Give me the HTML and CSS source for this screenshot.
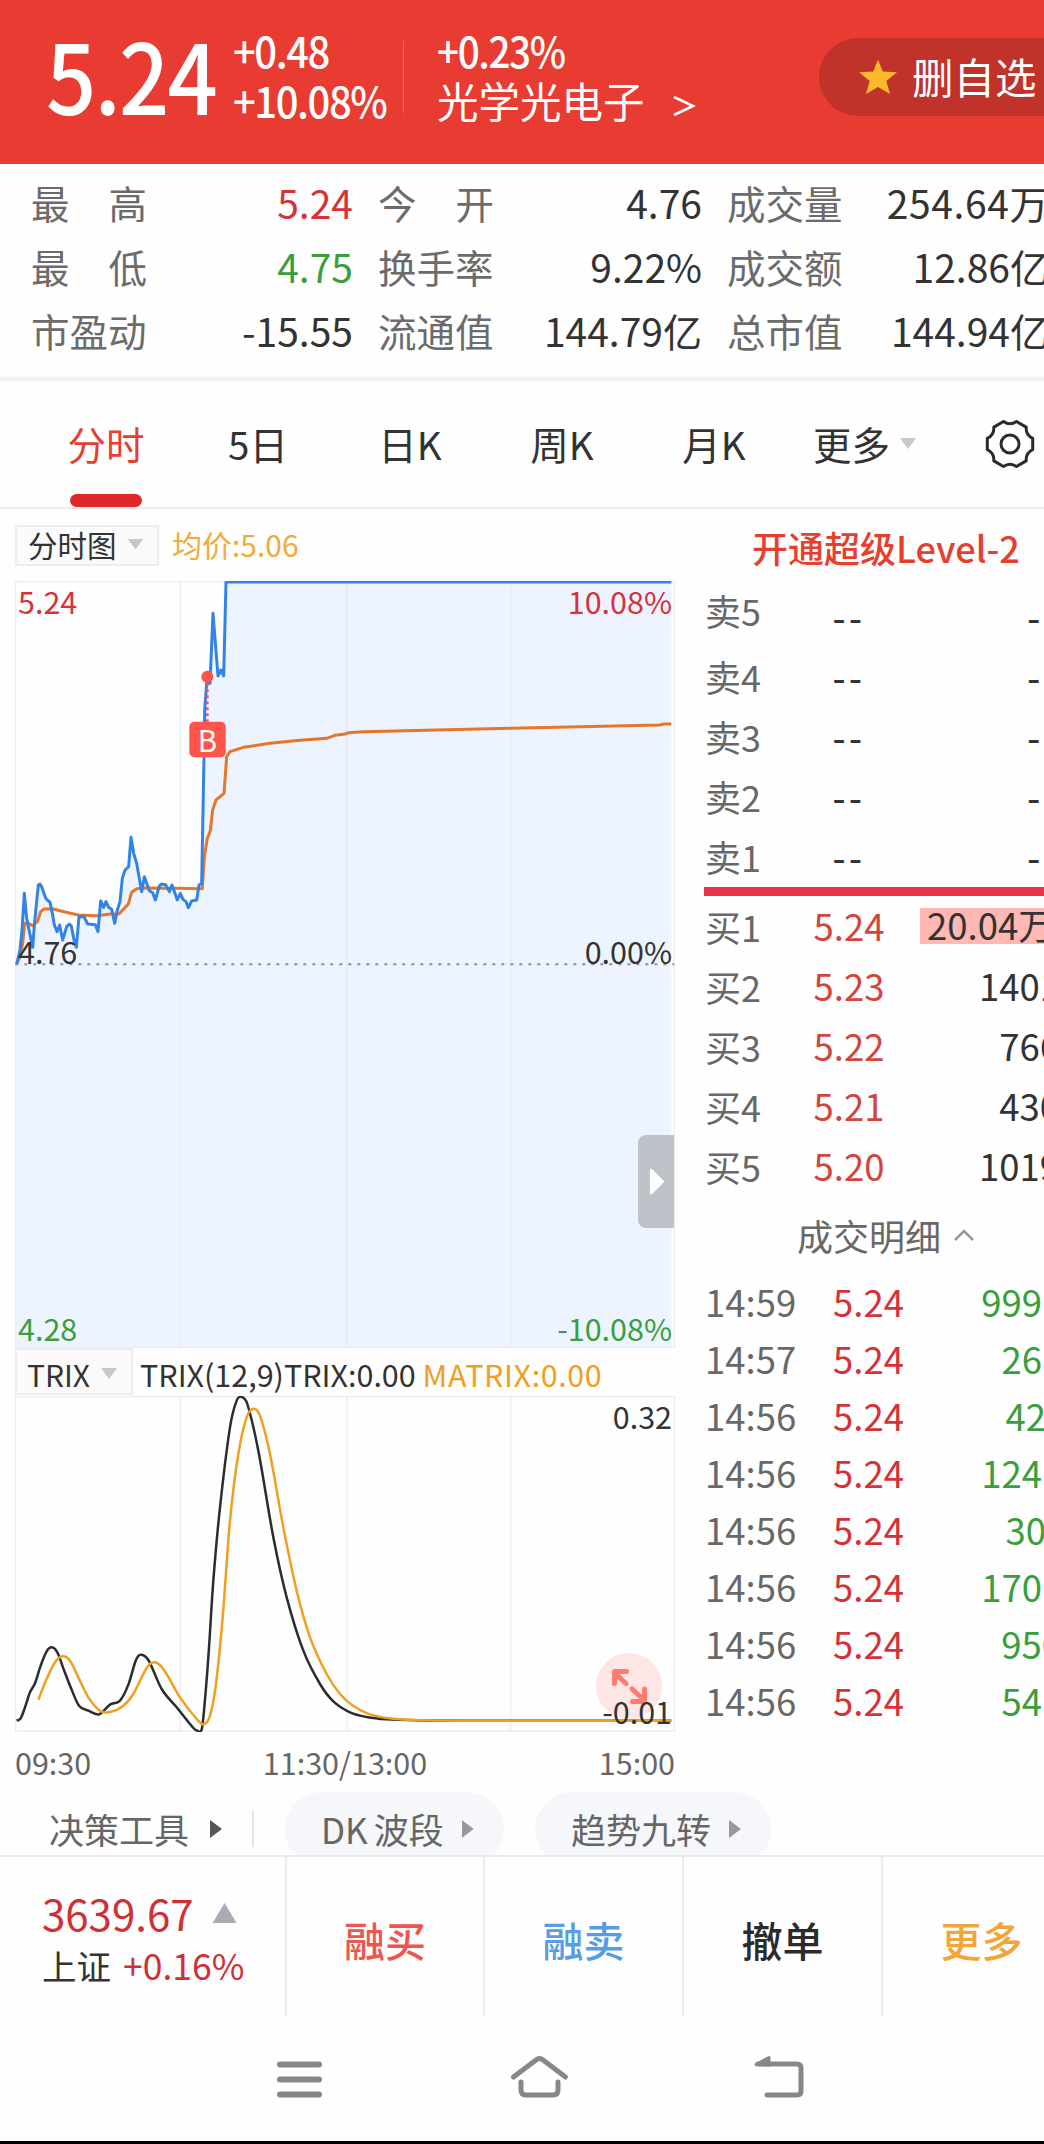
FILE: index.html
```html
<!DOCTYPE html>
<html lang="zh-CN">
<head>
  <meta charset="UTF-8">
  <title>分时行情</title>
  <link rel="stylesheet" href="styles.css">
</head>
<body>

  <header class="quote">
    <div class="price">5.24</div>
    <div class="change">
      <p>+0.48</p>
      <p>+10.08%</p>
    </div>
    <div class="sector">
      <p class="num">+0.23%</p>
      <p>光学光电子 <svg class="go" width="24" height="24" viewBox="0 0 24 24"><path d="M2 3L21 12L2 21" fill="none" stroke="#fff" stroke-width="2.6"/></svg></p>
    </div>
    <div class="fav">
      <svg width="40" height="38" viewBox="0 0 40 38"><path d="M20 1.500L24.700 13.500L39 14.200L28.300 23L32 36L20 29L8 36L11.700 23L1 14.200L15.300 13.500Z" fill="#fdb92e"/></svg>
      <span>删自选</span>
    </div>
  </header>

  <section class="stats">
    <span class="label wide">最<i></i>高</span><b class="red">5.24</b>
    <span class="label wide">今<i></i>开</span><b>4.76</b>
    <span class="label">成交量</span><b class="volume">254.64万</b>
    <span class="label wide">最<i></i>低</span><b class="green">4.75</b>
    <span class="label">换手率</span><b>9.22%</b>
    <span class="label">成交额</span><b>12.86亿</b>
    <span class="label">市盈动</span><b>-15.55</b>
    <span class="label">流通值</span><b>144.79亿</b>
    <span class="label">总市值</span><b>144.94亿</b>
  </section>

  <nav class="tabs">
    <a class="active">分时</a>
    <a>5日</a>
    <a>日K</a>
    <a>周K</a>
    <a>月K</a>
    <a class="more">更多<i class="down"></i></a>
    <svg class="gear" width="52" height="52" viewBox="0 0 52 52" fill="none" stroke="#2b2b2b" stroke-width="3">
      <path d="M19.500 3.500Q26 8 32.500 3.500L42.200 9.100Q41.600 17 48.700 20.400V31.600Q41.600 35 42.200 42.900L32.500 48.500Q26 44 19.500 48.500L9.800 42.900Q10.400 35 3.300 31.600V20.400Q10.400 17 9.800 9.100Z" stroke-linejoin="round"/>
      <circle cx="26" cy="26" r="9"/>
    </svg>
  </nav>

  <main class="main">
    <div class="charts">
      <div class="chart-head">
        <span class="select">分时图<i class="down"></i></span>
        <span class="avg">均价:5.06</span>
      </div>
      <div class="chart">
        <svg width="660" height="767" viewBox="45 63 1980 2301">
          <path id="area" fill="#edf4ff"/>
          <path class="grid" d="M46.500 64.500H2023V2362H46.500ZM541 64V2362M1041 64V2362M1532 64V2362"/>
          <path d="M46 1213H2023" stroke="#8b9098" stroke-width="6" stroke-dasharray="9 18"/>
          <path id="avg" class="line" stroke="#e5772a"/>
          <path id="price" class="line" stroke="#3283e6"/>
          <path d="M622 370V485" stroke="#f25461" stroke-width="8" stroke-dasharray="9 9"/>
          <circle cx="622" cy="350" r="18" fill="#ff5449"/>
          <rect x="568" y="485" width="109" height="107" rx="15" fill="#ff5449"/>
          <text x="622" y="577" text-anchor="middle" class="buy">B</text>
        </svg>
        <span class="tag top left red">5.24</span>
        <span class="tag top right red">10.08%</span>
        <span class="tag mid left">4.76</span>
        <span class="tag mid right">0.00%</span>
        <span class="tag low left green">4.28</span>
        <span class="tag low right green">-10.08%</span>
        <span class="handle"><svg width="16" height="27" viewBox="0 0 16 27"><path d="M1 2Q1 0 3 1L14 12Q16 13.500 14 15L3 26Q1 27 1 25Z" fill="#fff"/></svg></span>
      </div>
      <div class="trix-head">
        <span class="select">TRIX<i class="down"></i></span>
        <span class="trix-text">TRIX(12,9)TRIX:0.00 <em>MATRIX:0.00</em></span>
      </div>
      <div class="chart">
        <svg width="660" height="336" viewBox="45 346 1980 1008">
          <path class="grid" d="M46.500 348H2023V1351H46.500ZM541 348V1351M1041 348V1351M1532 348V1351"/>
          <path id="trix" class="line thin" stroke="#2a2c2e"/>
          <path id="matrix" class="line thin" stroke="#f0a020"/>
        </svg>
        <span class="expand">
          <svg width="66" height="66" viewBox="0 0 66 66" fill="none" stroke="#ff7b70" stroke-width="5" stroke-linecap="round" stroke-linejoin="round"><path d="M30 30.500L18.500 19.500M30.500 18.500H18.500V30.500M36 36L48 47M48.500 36V48.500H36.500"/></svg>
        </span>
        <span class="tag top right">0.32</span>
        <span class="tag last right">-0.01</span>
      </div>
      <div class="times"><span>09:30</span><span>11:30/13:00</span><span>15:00</span></div>
    </div>

    <aside class="book">
      <div class="level2">开通超级Level-2</div>
      <div class="sell">
        <div class="row first"><span>卖5</span><b>--</b><b>--</b></div>
        <div class="row"><span>卖4</span><b>--</b><b>--</b></div>
        <div class="row"><span>卖3</span><b>--</b><b>--</b></div>
        <div class="row"><span>卖2</span><b>--</b><b>--</b></div>
        <div class="row"><span>卖1</span><b>--</b><b>--</b></div>
      </div>
      <div class="buys">
        <div class="row"><span>买1</span><b>5.24</b><b><mark>20.04万</mark></b></div>
        <div class="row"><span>买2</span><b>5.23</b><b>1401</b></div>
        <div class="row"><span>买3</span><b>5.22</b><b>766</b></div>
        <div class="row"><span>买4</span><b>5.21</b><b>430</b></div>
        <div class="row"><span>买5</span><b>5.20</b><b>1019</b></div>
      </div>
      <div class="detail">成交明细<svg width="22" height="14" viewBox="0 0 22 14"><path d="M2 12L11 3L20 12" fill="none" stroke="#999" stroke-width="2.600"/></svg></div>
      <div class="ticks">
        <div><span>14:59</span><b>5.24</b><b>999</b></div>
        <div><span>14:57</span><b>5.24</b><b>26</b></div>
        <div><span>14:56</span><b>5.24</b><b class="cut">42</b></div>
        <div><span>14:56</span><b>5.24</b><b>124</b></div>
        <div><span>14:56</span><b>5.24</b><b class="cut">30</b></div>
        <div><span>14:56</span><b>5.24</b><b>170</b></div>
        <div><span>14:56</span><b>5.24</b><b class="over">950</b></div>
        <div><span>14:56</span><b>5.24</b><b>54</b></div>
      </div>
    </aside>
  </main>

  <section class="tools">
    <span class="tool">决策工具<i class="next dark"></i></span>
    <span class="pill dk"><span>DK</span>波段<i class="next"></i></span>
    <span class="pill nine">趋势九转<i class="next"></i></span>
  </section>

  <footer class="bar">
    <div class="index">
      <p class="points">3639.67<i class="up"></i></p>
      <p class="sh">上证<b>+0.16%</b></p>
    </div>
    <a class="margin-buy">融买</a>
    <a class="margin-sell">融卖</a>
    <a>撤单</a>
    <a class="other">更多</a>
  </footer>

  <div class="sysnav">
    <svg width="1044" height="125" viewBox="0 2016 1044 125" fill="none" stroke="#878787" stroke-width="6" stroke-linecap="round" stroke-linejoin="round">
      <path d="M280 2064.500H319M280 2079.500H319M280 2094.500H319"/>
      <path stroke-width="5" d="M513.500 2077L536 2060Q539.500 2057 543 2060L565.500 2077M521 2082V2090Q521 2095 526 2095H553Q558 2095 558 2090V2082"/>
      <path stroke-width="5" d="M767 2095H797Q801 2095 801 2091V2068Q801 2064 797 2064H758"/>
      <path d="M756 2064.500L769 2057.500V2065Z" fill="#878787" stroke-width="3"/>
    </svg>
  </div>

  <script>
    const price = [50,1212, 60,1170, 66,1110, 73,1000, 80,1075, 98,1162, 104,1085, 115,975, 120,972, 125,980, 137,1015, 150,1027, 157,1060, 163,1095, 171,1115, 179,1095, 188,1140, 200,1100, 208,1092, 214,1098, 222,1140, 229,1162, 237,1070, 252,1070, 263,1092, 286,1094, 294,1115, 302,1023, 311,1042, 318,1025, 326,1042, 335,1048, 344,1090, 352,1050, 360,1025, 367,955, 375,930, 386,920, 393,832, 401,880, 410,910, 425,995, 433,950, 448,992, 458,998, 466,1020, 478,978, 484,972, 497,974, 508,995, 516,975, 532,1020, 541,1000, 549,1018, 558,1025, 565,1043, 575,1023, 590,1020, 597,975, 605,970, 612,592, 614,450, 620,370, 630,370, 639,160, 654,348, 663,330, 671,348, 678,66, 2014,66];
    const avg = [50,1212, 60,1190, 68,1150, 74,1090, 85,1090, 98,1097, 112,1085, 122,1055, 132,1047, 160,1047, 195,1056, 235,1065, 290,1067, 330,1062, 357,1062, 385,1032, 395,997, 410,986, 435,984, 530,985, 607,986, 613,890, 622,835, 631,812, 638,750, 648,720, 672,700, 680,590, 690,575, 730,562, 810,550, 900,541, 980,535, 1005,526, 1035,522, 1045,518, 1090,515, 1530,505, 1980,495, 1990,492, 2014,492];
    const trix = [50,1320, 62,1313, 75,1280, 90,1235, 105,1208, 122,1155, 140,1112, 155,1100, 172,1115, 190,1163, 212,1220, 237,1275, 265,1290, 297,1301, 330,1272, 360,1260, 385,1212, 408,1138, 422,1122, 445,1138, 485,1225, 530,1280, 580,1342, 592,1350, 605,1347, 612,1290, 625,1130, 640,900, 660,680, 690,440, 710,360, 725,349, 742,370, 775,510, 820,770, 860,950, 910,1110, 960,1210, 1000,1262, 1050,1295, 1100,1309, 1160,1316, 1250,1319, 1400,1320, 2014,1320];
    const matrix = [115,1257, 140,1195, 165,1145, 188,1127, 210,1140, 235,1190, 265,1250, 300,1290, 330,1294, 370,1275, 400,1240, 440,1162, 463,1145, 490,1165, 540,1250, 590,1315, 612,1331, 630,1305, 648,1210, 668,1010, 690,720, 715,520, 740,410, 760,384, 780,405, 810,520, 850,740, 890,930, 930,1070, 980,1180, 1020,1240, 1060,1276, 1110,1301, 1180,1314, 1280,1319, 1400,1320, 2014,1320];

    function straight(p) {
      let d = "M" + p[0] + " " + p[1];
      for (let i = 2; i < p.length; i += 2) d += "L" + p[i] + " " + p[i + 1];
      return d;
    }

    function smooth(p) {
      const n = p.length / 2;
      const at = i => { i = Math.max(0, Math.min(n - 1, i)); return [p[i * 2], p[i * 2 + 1]]; };
      let d = "M" + at(0);
      for (let i = 0; i < n - 1; i++) {
        const a = at(i - 1), b = at(i), c = at(i + 1), e = at(i + 2);
        // keep the handles inside the segment on uneven steps
        const w = c[0] - b[0];
        const s1 = (c[1] - a[1]) / (c[0] - a[0]), s2 = (e[1] - b[1]) / (e[0] - b[0]);
        d += "C" + [b[0] + w / 3, b[1] + s1 * w / 3, c[0] - w / 3, c[1] - s2 * w / 3, c[0], c[1]];
      }
      return d;
    }

    document.getElementById("price").setAttribute("d", straight(price));
    document.getElementById("area").setAttribute("d", straight(price) + "V2362H47V1213Z");
    document.getElementById("avg").setAttribute("d", straight(avg));
    document.getElementById("trix").setAttribute("d", smooth(trix));
    document.getElementById("matrix").setAttribute("d", smooth(matrix));
  </script>

</body>
</html>
```

FILE: styles.css
```css
* {
  box-sizing: border-box;
}

body {
  margin: 0;
  width: 1044px;
  height: 2144px;
  overflow: hidden;
  background: #fefefe;
  color: #333;
  font-family: "Noto Sans CJK SC", sans-serif;
  border-bottom: 3px solid #000;
}

p {
  margin: 0;
}

b {
  font-weight: 400;
}

i, em {
  font-style: normal;
}

svg {
  display: block;
}

.red { color: #d63238; }
.green { color: #3a9e3c; }

/* triangles */
.down, .up, .next {
  display: block;
  flex: none;
}

.down {
  width: 16px;
  height: 11px;
  background: #c8c8c8;
  clip-path: polygon(0 0, 100% 0, 50% 100%);
}

.up {
  width: 24px;
  height: 20px;
  background: #a9abb5;
  clip-path: polygon(50% 0, 100% 100%, 0 100%);
}

.next {
  width: 12px;
  height: 18px;
  background: #999;
  clip-path: polygon(0 0, 100% 50%, 0 100%);
}

.next.dark {
  background: #555;
}

/* header */
.quote {
  height: 164px;
  background: #e83c32;
  color: #fff;
  display: flex;
}

.price {
  width: 186px;
  margin-left: 46px;
  font-size: 97px;
  font-weight: 500;
  line-height: 146px;
  transform: scaleX(0.91);
  transform-origin: left;
  letter-spacing: -2px;
}

.change {
  width: 172px;
  height: 72px;
  margin-top: 41px;
  border-right: 1px solid #ef6b5f;
  font-size: 42.5px;
  font-weight: 500;
  line-height: 50px;
  letter-spacing: -1.5px;
}

.change p {
  width: 160px;
  margin: -16px 0 0 1px;
  transform: scaleX(0.94);
  transform-origin: left;
}

.change p + p {
  margin-top: 0;
}

.sector {
  width: 383px;
  margin-left: 33px;
  padding-top: 24px;
  font-size: 41.5px;
  line-height: 51px;
}

.sector .num {
  font-size: 42px;
  font-weight: 500;
  letter-spacing: -1.5px;
  transform: scaleX(0.92);
  transform-origin: left;
}

.sector .go {
  display: inline-block;
  margin-left: 18px;
}

.fav {
  flex: 1;
  height: 78px;
  margin-top: 38px;
  margin-left: -1px;
  padding-left: 39px;
  border-radius: 39px 0 0 39px;
  background: #c1322a;
  display: flex;
  align-items: center;
  font-size: 41.5px;
  line-height: 78px;
  white-space: nowrap;
}

.fav span {
  margin: -2px 0 0 14px;
}

/* numbers under the header */
.stats {
  width: 1049px;
  height: 213px;
  padding: 6px 0 0 31px;
  display: grid;
  grid-template-columns: 119px 203px 146px 203px 144px 203px;
  grid-template-rows: repeat(3, 64px);
  line-height: 64px;
  font-size: 38.5px;
  white-space: nowrap;
}

.stats .label {
  color: #6b6b6b;
}

.stats .label:nth-of-type(3n + 2) {
  padding-left: 25px;
}

.stats .label:nth-of-type(3n) {
  padding-left: 25px;
}

.stats .wide i {
  display: inline-block;
  width: 39px;
}

.stats b {
  font-size: 39px;
  text-align: right;
}

.stats .volume {
  letter-spacing: 0.6px;
}

/* tabs */
.tabs {
  height: 132px;
  border-top: 4px solid #f2f2f2;
  border-bottom: 2px solid #ececec;
  padding-left: 30px;
  display: flex;
  font-size: 38.5px;
  line-height: 125px;
}

.tabs a {
  width: 152px;
  text-align: center;
  position: relative;
}

.tabs .active {
  color: #e5402f;
}

.tabs .active::after {
  content: "";
  position: absolute;
  left: 40px;
  bottom: 0;
  width: 72px;
  height: 13px;
  border-radius: 7px;
  background: #e0282b;
}

.tabs .more {
  width: 174px;
  height: 125px;
  padding-left: 23px;
  display: flex;
  align-items: center;
}

.tabs .more .down {
  margin-left: 10px;
}

.gear {
  margin-top: 37px;
  margin-left: 20px;
}

.main {
  height: 1268px;
  display: flex;
}

.charts {
  width: 660px;
  margin-left: 15px;
  font-size: 30px;
}

.chart-head {
  height: 72px;
  padding-top: 16px;
  display: flex;
}

.select {
  height: 41px;
  width: 144px;
  padding-left: 11px;
  border: 2px solid #ededed;
  background: #fafafa;
  display: flex;
  align-items: center;
  font-size: 29.5px;
  line-height: 34px;
}

.chart-head .select {
  padding-bottom: 3px;
}

.select .down {
  margin-left: 11px;
}

.avg {
  margin: -1px 0 0 13px;
  color: #f0ab3c;
  line-height: 41px;
}

.chart {
  position: relative;
}

.grid {
  fill: none;
  stroke: #e4e9ee;
  stroke-width: 4;
  stroke-opacity: 0.8;
}

.line {
  fill: none;
  stroke-width: 9;
  stroke-linejoin: round;
}

.thin {
  stroke-width: 7.5;
}

.buy {
  fill: #fff;
  font-size: 88px;
}

.tag {
  position: absolute;
  line-height: 30px;
  font-size: 30.5px;
}

.left { left: 3px; }
.right { right: 3px; }
.top { top: 5px; }
.mid { top: 355px; }
.low { bottom: 5px; }
.last { bottom: 6px; }

.handle {
  position: absolute;
  right: 1px;
  top: 554px;
  width: 36px;
  height: 93px;
  border-radius: 8px 0 0 8px;
  background: #bfc3c9;
  display: flex;
  align-items: center;
  padding-left: 11px;
}

.trix-head {
  height: 48px;
  display: flex;
  line-height: 52px;
}

.trix-head .select {
  width: 118px;
  height: 47px;
  padding-top: 4px;
  padding-left: 10px;
  font-size: 30px;
}

.trix-text {
  margin-left: 7px;
  font-size: 30.5px;
  white-space: nowrap;
}

.trix-text em {
  letter-spacing: 0.6px;
  color: #f0a020;
}

.expand {
  position: absolute;
  left: 581px;
  top: 257px;
  width: 66px;
  height: 66px;
  border-radius: 50%;
  background: #fde6e4;
}

.times {
  padding: 10px 0 0 0;
  display: flex;
  justify-content: space-between;
  color: #666;
  font-size: 30.5px;
  line-height: 40px;
}

/* order book */
.book {
  width: 356px;
  margin-left: 29px;
  flex: none;
  font-size: 36px;
  white-space: nowrap;
}

.level2 {
  height: 71px;
  padding-left: 48px;
  color: #e5402f;
  font-weight: 500;
  line-height: 77px;
}

.sell {
  height: 316px;
  border-bottom: 9px solid #e83349;
}

.row {
  height: 60px;
  display: grid;
  grid-template-columns: 89px 112px 155px;
  line-height: 60px;
}

.row span, .ticks span {
  color: #686868;
  padding-left: 1px;
}

.row b {
  font-size: 36.5px;
  text-align: center;
}

.row b:last-child {
  text-align: right;
}

.sell .row b {
  padding-top: 1px;
  font-weight: 500;
  letter-spacing: 3.4px;
}

.sell .first {
  height: 66px;
}

.sell .first b {
  padding-top: 7px;
}

.buys b:nth-child(2) {
  color: #d2453b;
}

.buys mark {
  display: block;
  height: 36px;
  margin-top: 12px;
  margin-left: 15px;
  padding-left: 7px;
  background: #ffb8b4;
  color: #333;
  line-height: 34px;
  text-align: left;
}

.detail {
  height: 77px;
  padding-left: 93px;
  display: flex;
  align-items: center;
  color: #686868;
}

.detail svg {
  margin-left: 12px;
}

.ticks div {
  height: 57px;
  display: grid;
  grid-template-columns: 129px 90px 119px;
  font-size: 36.5px;
  line-height: 57px;
}

.ticks b {
  color: #d43238;
}

.ticks b:last-child {
  color: #3a9e3c;
  text-align: right;
}

.ticks .cut {
  margin-right: -4px;
}

.ticks .over {
  margin-right: -20px;
}

/* tools */
.tools {
  height: 78px;
  padding: 15px 0 0 49px;
  overflow: hidden;
  display: flex;
  font-size: 35px;
  line-height: 74px;
  color: #666;
}

.tool, .pill {
  height: 74px;
  display: flex;
  align-items: center;
}

.tool {
  width: 205px;
  margin-right: 31px;
  background: linear-gradient(#e4e4e4, #e4e4e4) right 19px / 2px 36px no-repeat;
}

.tool .next {
  margin-left: 21px;
}

.pill {
  width: 219px;
  margin-right: 31px;
  padding-left: 36px;
  border-radius: 37px;
  background: #f5f7fb;
}

.dk span {
  margin-right: 6px;
}

.pill .next {
  margin-left: 18px;
}

.nine {
  width: 236px;
}

/* bottom bar */
.bar {
  height: 161px;
  border-top: 2px solid #ebebeb;
  display: grid;
  grid-template-columns: 285px 198px 199px 199px 199px;
  font-size: 41px;
  font-weight: 500;
}

.bar a {
  height: 159px;
  padding-top: 4px;
  border-left: 2px solid #ececec;
  line-height: 157px;
  text-align: center;
  color: #2b2b2b;
}

.index {
  padding: 27px 0 0 42px;
  font-weight: 400;
}

.points {
  display: flex;
  align-items: center;
  height: 58px;
  font-size: 42px;
  line-height: 58px;
  color: #d02f35;
}

.points .up {
  margin-left: 19px;
}

.sh {
  height: 46px;
  font-size: 34.5px;
  line-height: 46px;
}

.sh b {
  margin-left: 12px;
  font-size: 35.5px;
  color: #d02f35;
}

.bar .margin-buy { color: #ee554c; }
.bar .margin-sell { color: #589ce6; }
.bar .other { color: #f2a63a; }
```
